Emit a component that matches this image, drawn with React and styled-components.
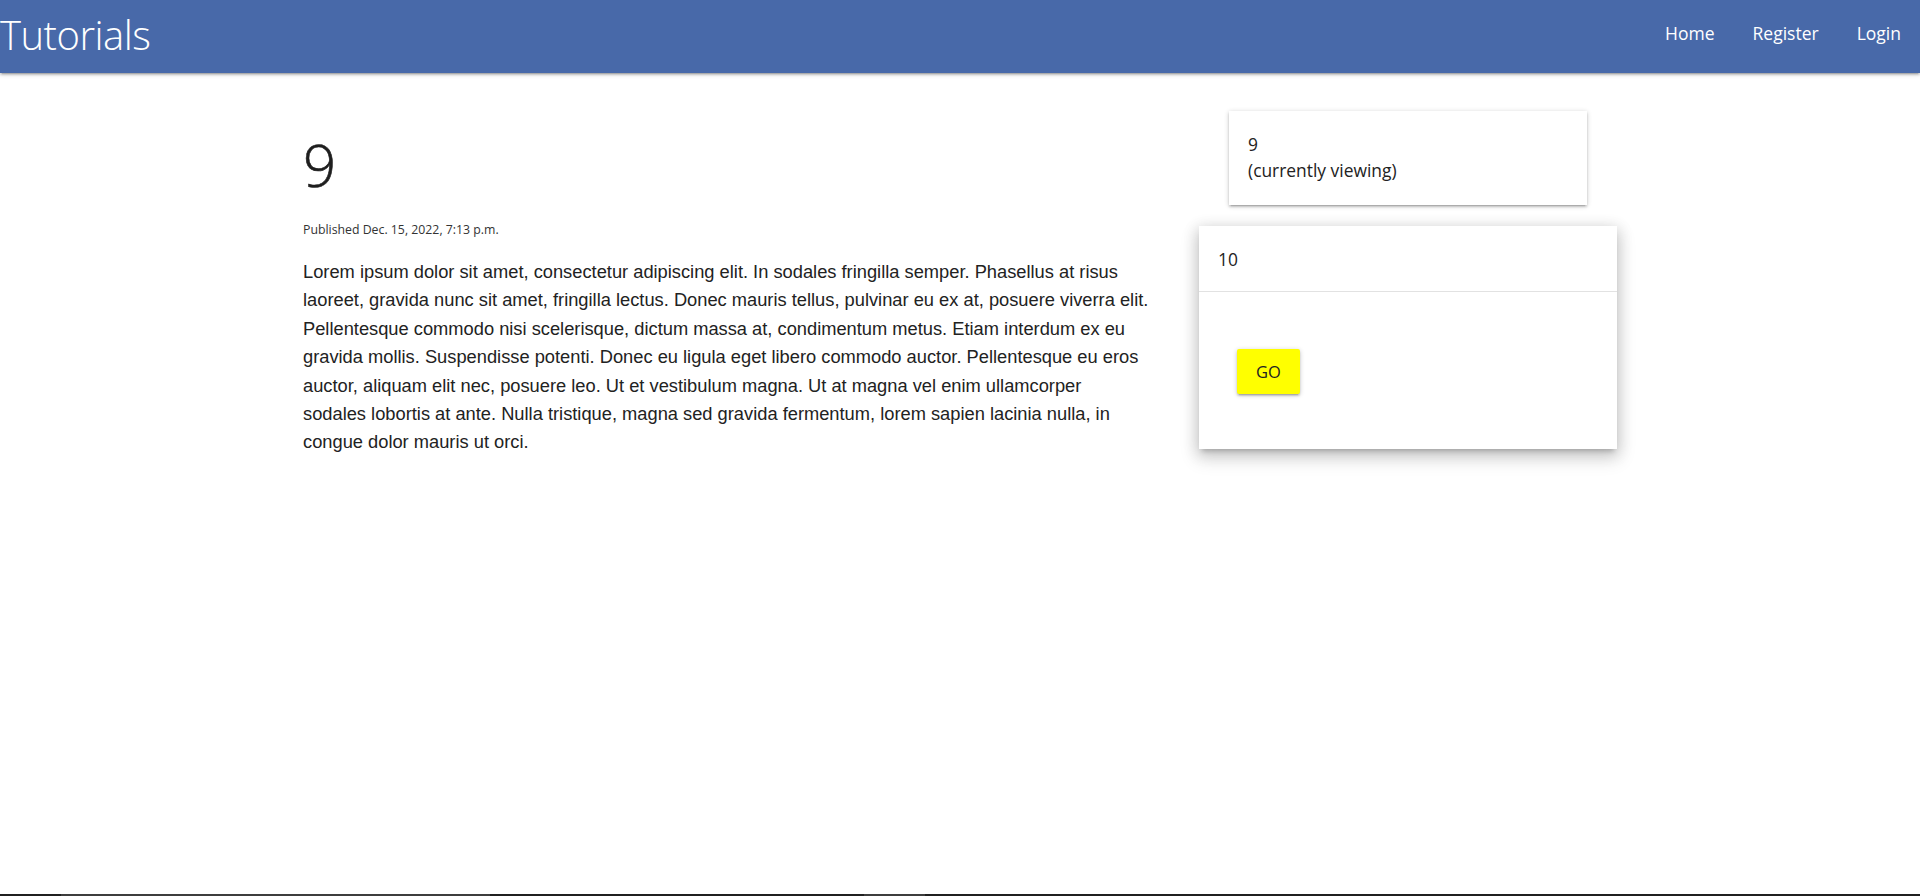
import React from 'react';
import styled, { createGlobalStyle } from 'styled-components';

const GlobalStyle = createGlobalStyle`
  html, body { margin: 0; padding: 0; background: #ffffff; }
  body { font-family: 'Open Sans', 'Noto Sans', sans-serif; color: rgba(0, 0, 0, 0.87); }
  * { box-sizing: border-box; }
`;

const Page = styled.div`
  min-height: 100vh;
  display: flex;
  flex-direction: column;
`;

const Navbar = styled.nav`
  height: 73px;
  background: #4869a9;
  display: flex;
  align-items: flex-start;
  justify-content: space-between;
  box-shadow: 0 2px 2px 0 rgba(0, 0, 0, 0.14), 0 3px 1px -2px rgba(0, 0, 0, 0.12), 0 1px 5px 0 rgba(0, 0, 0, 0.2);
`;

const Brand = styled.a`
  color: #ffffff;
  font-size: 40px;
  font-weight: 300;
  line-height: 70px;
  letter-spacing: -0.5px;
  text-decoration: none;
`;

const NavLinks = styled.ul`
  display: flex;
  list-style: none;
  margin: 0;
  padding: 0;
`;

const NavLink = styled.a`
  display: block;
  color: #ffffff;
  font-size: 17.5px;
  line-height: 66px;
  padding: 0 19px;
  text-decoration: none;
`;

const Container = styled.main`
  width: 70%;
  margin: 0 auto;
  display: grid;
  grid-template-columns: 2fr 1fr;
  flex: 1;
`;

const Article = styled.article`
  padding: 0 15px;
`;

const Title = styled.h1`
  font-size: 58px;
  font-weight: 300;
  color: #1e1e1e;
  margin: 57px 0 0;
  line-height: 70px;
  -webkit-text-stroke: 0.6px #1e1e1e;
`;

const Published = styled.small`
  display: block;
  font-size: 12.3px;
  color: #333;
  margin-top: 21px;
`;

const Body = styled.p`
  font-family: 'Liberation Sans', Arial, sans-serif;
  font-size: 18.3px;
  line-height: 28.4px;
  color: #222;
  margin: 20px 0 0;
`;

const Sidebar = styled.aside`
  padding: 0 15px;
  display: flex;
  flex-direction: column;
  gap: 21px;
  padding-top: 38px;
`;

const Card = styled.div`
  background: #fff;
  margin: ${(p) => (p.$inset ? '0 30px' : '0')};
  box-shadow: ${(p) =>
    p.$raised
      ? '0 8px 17px 2px rgba(0,0,0,0.14), 0 3px 14px 2px rgba(0,0,0,0.12), 0 5px 5px -3px rgba(0,0,0,0.2)'
      : '0 2px 2px 0 rgba(0,0,0,0.14), 0 3px 1px -2px rgba(0,0,0,0.12), 0 1px 5px 0 rgba(0,0,0,0.2)'};
`;

const CardContent = styled.div`
  padding: 20px 19px ${(p) => (p.$tall ? '22px' : '19px')};
  font-size: 17.4px;
  line-height: 26px;
  color: #222;
`;

const CardAction = styled.div`
  border-top: 1px solid rgba(160, 160, 160, 0.3);
  padding: 57px 38px 55px;
`;

const GoButton = styled.button`
  display: inline-block;
  height: 45px;
  padding: 0 19px;
  border: none;
  border-radius: 2px;
  background: #ffff00;
  color: #222;
  font-family: 'Open Sans', 'Noto Sans', sans-serif;
  font-size: 16.5px;
  text-transform: uppercase;
  cursor: pointer;
  box-shadow: 0 2px 2px 0 rgba(0,0,0,0.14), 0 3px 1px -2px rgba(0,0,0,0.12), 0 1px 5px 0 rgba(0,0,0,0.2);
`;

const Taskbar = styled.div`
  height: 2px;
  background: #202020;
  display: flex;
`;

const TaskSegment = styled.span`
  height: 100%;
  background: ${(p) => (p.$active ? '#3d3d3d' : 'transparent')};
  width: ${(p) => p.$w}px;
`;

const textStart =
  'Lorem ipsum dolor sit amet, consectetur adipiscing elit. In sodales fringilla semper. Phasellus at risus laoreet, gravida nunc sit amet, fringilla lectus. Donec mauris tellus, pulvinar eu ex at, posuere viverra elit. Pellentesque commodo nisi scelerisque, dictum massa at, condimentum metus. Etiam interdum ex eu gravida mollis. Suspendisse potenti. Donec eu ligula eget libero commodo auctor. Pellentesque eu eros auctor, aliquam elit nec, posuere leo. Ut et vestibulum magna. Ut at magna vel enim ullamcorper';
const textEnd =
  'sodales lobortis at ante. Nulla tristique, magna sed gravida fermentum, lorem sapien lacinia nulla, in congue dolor mauris ut orci.';

const segments = [
  { w: 61 }, { w: 429, active: true }, { w: 374 }, { w: 61, active: true },
];

export default function App() {
  return (
    <Page>
      <GlobalStyle />
      <Navbar>
        <Brand href="#">Tutorials</Brand>
        <NavLinks>
          <li><NavLink href="#">Home</NavLink></li>
          <li><NavLink href="#">Register</NavLink></li>
          <li><NavLink href="#">Login</NavLink></li>
        </NavLinks>
      </Navbar>

      <Container>
        <Article>
          <Title>9</Title>
          <Published>Published Dec. 15, 2022, 7:13 p.m.</Published>
          <Body>
            {textStart}
            <br />
            {textEnd}
          </Body>
        </Article>

        <Sidebar>
          <Card $inset>
            <CardContent $tall>
              9<br />(currently viewing)
            </CardContent>
          </Card>
          <Card $raised>
            <CardContent>10</CardContent>
            <CardAction>
              <GoButton>Go</GoButton>
            </CardAction>
          </Card>
        </Sidebar>
      </Container>

      <Taskbar>
        {segments.map((s, i) => (
          <TaskSegment key={i} $w={s.w} $active={s.active} />
        ))}
      </Taskbar>
    </Page>
  );
}
